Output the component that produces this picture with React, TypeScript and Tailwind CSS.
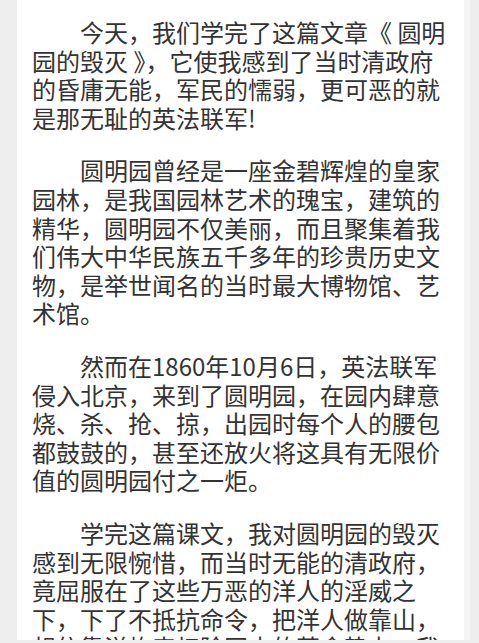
import React from 'react';

const paragraphs: string[] = [
  '今天，我们学完了这篇文章《 圆明园的毁灭 》，它使我感到了当时清政府的昏庸无能，军民的懦弱，更可恶的就是那无耻的英法联军!',
  '圆明园曾经是一座金碧辉煌的皇家园林，是我国园林艺术的瑰宝，建筑的精华，圆明园不仅美丽，而且聚集着我们伟大中华民族五千多年的珍贵历史文物，是举世闻名的当时最大博物馆、艺术馆。',
  '然而在1860年10月6日，英法联军侵入北京，来到了圆明园，在园内肆意烧、杀、抢、掠，出园时每个人的腰包都鼓鼓的，甚至还放火将这具有无限价值的圆明园付之一炬。',
  '学完这篇课文，我对圆明园的毁灭感到无限惋惜，而当时无能的清政府，竟屈服在了这些万恶的洋人的淫威之下，下了不抵抗命令，把洋人做靠山，想依靠洋炮来扫除国内的革命势力，我们的国家就这样任人宰割。',
];

const App: React.FC = () => {
  return (
    <div className="h-[643px] w-[479px] overflow-hidden bg-[#eeeeee]">
      <div className="ml-[17px] flex h-[640px] w-[453px] overflow-hidden">
        <div className="h-full w-[447px] overflow-hidden bg-white pl-[15px] pr-[16px] pt-[18px]">
          {paragraphs.map((text, i) => (
            <p
              key={i}
              className="mb-6 w-[416px] indent-[48px] text-[24px] leading-[28.6px] text-[#333333] [font-family:'Noto_Sans_CJK_SC',sans-serif]"
            >
              {text}
            </p>
          ))}
        </div>
        <div className="h-full w-[6px] bg-[#f5f5f5]" />
      </div>
    </div>
  );
};

export default App;
